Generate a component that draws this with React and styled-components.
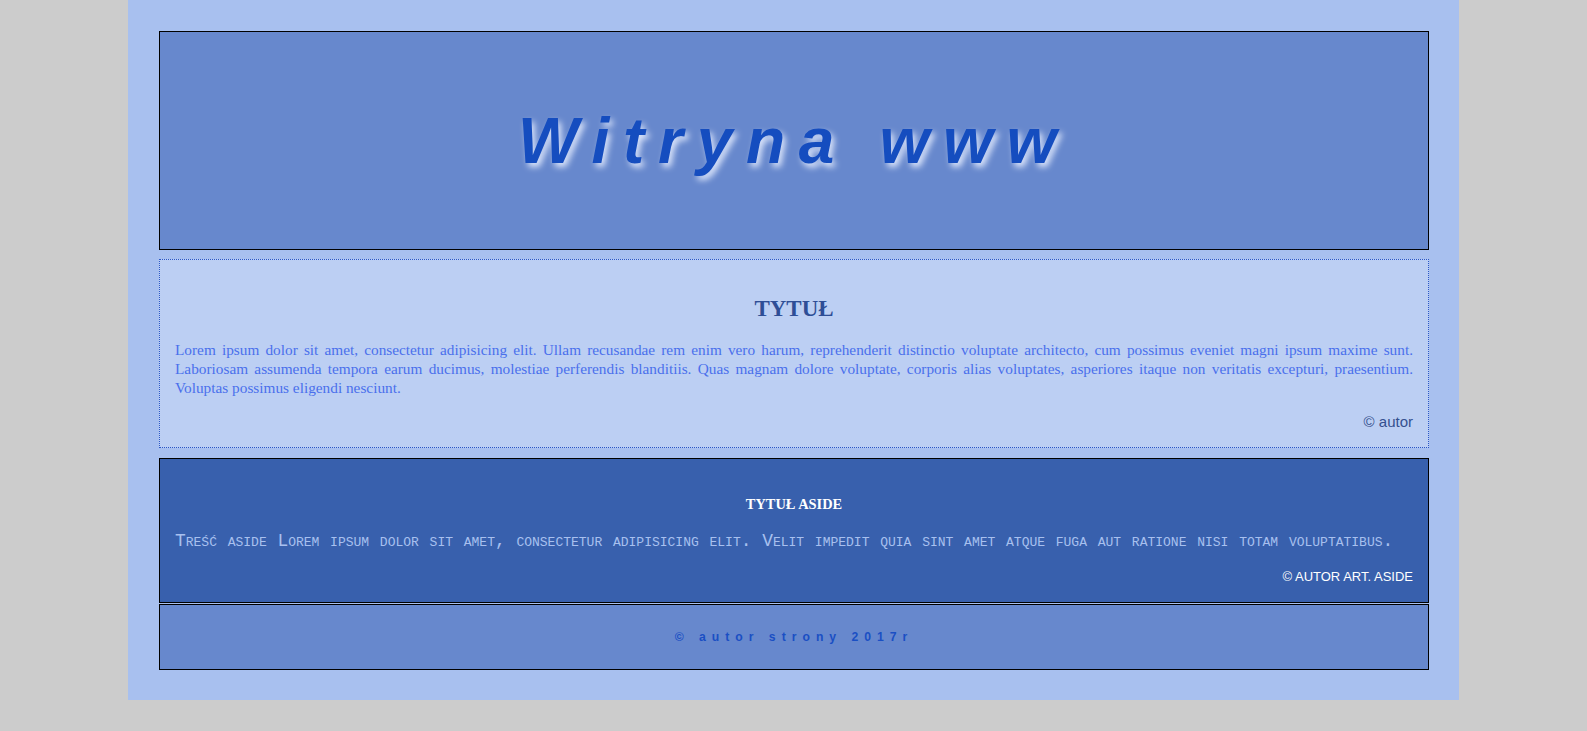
import React from "react";
import styled, { createGlobalStyle } from "styled-components";

const GlobalStyle = createGlobalStyle`
  html, body {
    margin: 0;
    padding: 0;
    background-color: #cccccc;
  }
`;

const Page = styled.div`
  width: 1270px;
  margin: 0 auto;
  padding: 31px 30px 30px 31px;
  background-color: #a8c0ef;
`;

const Header = styled.header`
  display: flex;
  align-items: center;
  justify-content: center;
  height: 217px;
  margin-bottom: 9px;
  border: 1px solid #000;
  background-color: #6788cd;
`;

const SiteTitle = styled.h1`
  margin: 0;
  font-family: "Liberation Sans", Arial, sans-serif;
  font-size: 64px;
  font-weight: bold;
  font-style: italic;
  letter-spacing: 13.7px;
  color: #154dbf;
  text-shadow: 3px 4px 6px rgba(225, 234, 253, 0.95);
`;

const Article = styled.section`
  padding: 16px 15px 17px;
  margin-bottom: 10px;
  border: 1px dotted #2a56c6;
  background-color: #bccff3;
`;

const ArticleTitle = styled.h2`
  margin: 20px 0 18px;
  font-family: "Liberation Serif", "Times New Roman", serif;
  font-size: 23px;
  line-height: 26px;
  font-weight: bold;
  text-align: center;
  color: #2e4e96;
`;

const ArticleText = styled.p`
  margin: 0;
  font-family: "Liberation Serif", "Times New Roman", serif;
  font-size: 15.3px;
  line-height: 19px;
  text-align: justify;
  color: #4a70ec;
`;

const Signature = styled.p`
  margin: ${(props) => props.$gap} 0 0;
  font-family: "Liberation Sans", Arial, sans-serif;
  font-size: ${(props) => props.$size};
  text-align: right;
  text-transform: ${(props) => (props.$upper ? "uppercase" : "none")};
  color: ${(props) => props.$color};
`;

const Aside = styled.aside`
  padding: 15px 15px 18px;
  margin-bottom: 1px;
  border: 1px solid #000;
  background-color: #3860ad;
`;

const AsideTitle = styled.h3`
  margin: 22px 0 19px;
  font-family: "Liberation Serif", "Times New Roman", serif;
  font-size: 14.4px;
  line-height: 16px;
  font-weight: bold;
  text-align: center;
  color: #ffffff;
`;

const AsideText = styled.p`
  margin: 0;
  font-family: "Liberation Mono", "Courier New", monospace;
  font-size: 17.9px;
  font-variant: small-caps;
  color: #a8c0ef;
`;

const Footer = styled.footer`
  display: flex;
  align-items: center;
  justify-content: center;
  height: 64px;
  border: 1px solid #000;
  background-color: #6788cd;
`;

const FooterText = styled.p`
  margin: 0;
  font-family: "Liberation Sans", Arial, sans-serif;
  font-size: 12.2px;
  font-weight: bold;
  letter-spacing: 6px;
  color: #1a4fc4;
`;

const App = () => {
  const lorem =
    "Lorem ipsum dolor sit amet, consectetur adipisicing elit. Ullam recusandae rem enim vero harum, reprehenderit distinctio voluptate architecto, cum possimus eveniet magni ipsum maxime sunt. Laboriosam assumenda tempora earum ducimus, molestiae perferendis blanditiis. Quas magnam dolore voluptate, corporis alias voluptates, asperiores itaque non veritatis excepturi, praesentium. Voluptas possimus eligendi nesciunt.";

  return (
    <>
      <GlobalStyle />
      <Page>
        <Header>
          <SiteTitle>Witryna www</SiteTitle>
        </Header>

        {/* Main article */}
        <Article>
          <ArticleTitle>TYTUŁ</ArticleTitle>
          <ArticleText>{lorem}</ArticleText>
          <Signature $gap="16px" $size="15px" $color="#34508f">
            © autor
          </Signature>
        </Article>

        {/* Aside */}
        <Aside>
          <AsideTitle>TYTUŁ ASIDE</AsideTitle>
          <AsideText>
            Treść aside Lorem ipsum dolor sit amet, consectetur adipisicing elit. Velit impedit quia sint amet atque fuga aut ratione nisi totam voluptatibus.
          </AsideText>
          <Signature $gap="18px" $size="13px" $color="#ffffff" $upper>
            © autor art. aside
          </Signature>
        </Aside>

        <Footer>
          <FooterText>© autor strony 2017r</FooterText>
        </Footer>
      </Page>
    </>
  );
};

export default App;
